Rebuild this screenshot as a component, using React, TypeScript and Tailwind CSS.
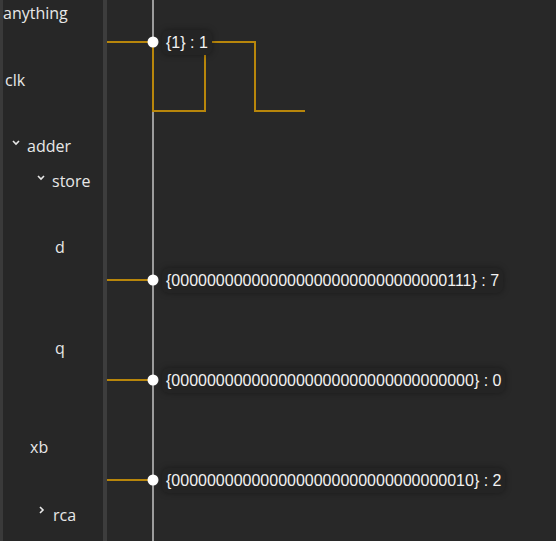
import React from 'react';

const bits = (tail: string) => '{' + '0'.repeat(34 - tail.length) + tail + '}';

const Chevron = ({ open }: { open: boolean }) => (
  <svg width="8" height="8" viewBox="0 0 8 8" className="mb-[9px] shrink-0">
    {open ? (
      <polyline points="1,3 4,6 7,3" fill="none" stroke="#e8e8e8" strokeWidth="1.6" />
    ) : (
      <polyline points="2,1 5,4 2,7" fill="none" stroke="#e8e8e8" strokeWidth="1.6" />
    )}
  </svg>
);

const rows = [
  { label: 'anything', h: 'h-[26px]', pad: 'pl-0' },
  { label: 'clk', h: 'h-[108px]', pad: 'pl-[2px]' },
  { label: 'adder', h: 'h-[24px]', pad: 'pl-[9px]', chevron: 'open' },
  { label: 'store', h: 'h-[46px]', pad: 'pl-[34px]', chevron: 'open' },
  { label: 'd', h: 'h-[86px]', pad: 'pl-[52px]' },
  { label: 'q', h: 'h-[116px]', pad: 'pl-[52px]' },
  { label: 'xb', h: 'h-[82px]', pad: 'pl-[27px]' },
  { label: 'rca', h: 'h-[53px]', pad: 'pl-[35px]', chevron: 'closed' },
];

const values = [
  { top: 'top-[30px]', text: '{1} : 1' },
  { top: 'top-[268px]', text: bits('111') + ' : 7' },
  { top: 'top-[368px]', text: bits('') + ' : 0' },
  { top: 'top-[468px]', text: bits('10') + ' : 2' },
];

export default function App() {
  const orange = '#b8860b';
  return (
    <div className="flex h-[541px] w-[556px] overflow-hidden bg-[#282828]">
      <div className="w-[3px] shrink-0 bg-[#3a3a3a]" />
      <div className="flex w-[100px] shrink-0 flex-col bg-[#272727] text-[16px] text-[#e8e8e8] [font-family:'Open_Sans',sans-serif]">
        {rows.map((r) => (
          <div key={r.label} className={`flex items-center ${r.h} ${r.pad}`}>
            {r.chevron && (
              <span className="mr-[7px] flex">
                <Chevron open={r.chevron === 'open'} />
              </span>
            )}
            <span className="leading-none">{r.label}</span>
          </div>
        ))}
      </div>
      <div className="w-[4px] shrink-0 bg-[#3d3d3d]" />
      <div className="relative flex-1">
        <svg className="absolute inset-0" width="449" height="541">
          <line x1="46" y1="0" x2="46" y2="541" stroke="#9c9c9c" strokeWidth="2" />
          <path d="M0 42 H46 V111 H98 V42 H148 V111 H198" fill="none" stroke={orange} strokeWidth="2" />
          <path d="M0 280 H46" stroke={orange} strokeWidth="2" />
          <path d="M0 380 H46" stroke={orange} strokeWidth="2" />
          <path d="M0 480 H46" stroke={orange} strokeWidth="2" />
          <circle cx="46" cy="42" r="5.5" fill="#ffffff" />
          <circle cx="46" cy="280" r="5.5" fill="#ffffff" />
          <circle cx="46" cy="380" r="5.5" fill="#ffffff" />
          <circle cx="46" cy="480" r="5.5" fill="#ffffff" />
        </svg>
        {values.map((v) => (
          <div
            key={v.top}
            className={`absolute left-[55px] ${v.top} h-[25px] rounded-md bg-[#242424] px-[4px] text-[16px] leading-[25px] whitespace-nowrap text-[#f2f2f2] shadow-[0_0_6px_rgba(0,0,0,0.35)] [font-family:'Liberation_Sans',Arial,sans-serif]`}
          >
            {v.text}
          </div>
        ))}
      </div>
    </div>
  );
}
